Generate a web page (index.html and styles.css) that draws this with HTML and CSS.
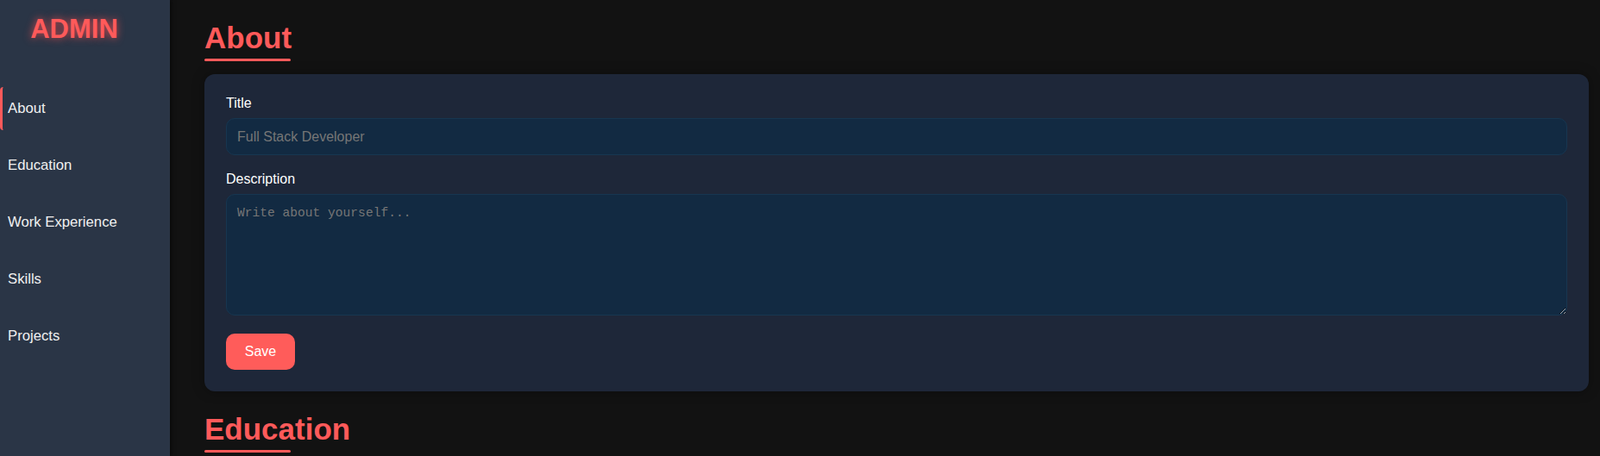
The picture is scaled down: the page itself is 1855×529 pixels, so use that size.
FILE: index.html
```html
<!DOCTYPE html>
<html lang="en">
<head>
    <meta charset="UTF-8">
    <meta name="viewport" content="width=device-width, initial-scale=1.0">
    <title>Admin Panel</title>
    <link rel="stylesheet" href="styles.css">
</head>
<body>

    <div class="sidebar">
        <h2 class="logo">ADMIN</h2>
        <ul class="nav">
            <li class="active">About</li>
            <li>Education</li>
            <li>Work Experience</li>
            <li>Skills</li>
            <li>Projects</li>
        </ul>
    </div>

    <div class="main">
        <section id="about">
            <h2 class="section-title">About</h2>
            <form class="card">
                <div class="form-group">
                    <label for="title">Title</label>
                    <input type="text" id="title" placeholder="Full Stack Developer">
                </div>
                <div class="form-group">
                    <label for="description">Description</label>
                    <textarea id="description" placeholder="Write about yourself..."></textarea>
                </div>
                <button type="button" class="save-btn">Save</button>
            </form>
        </section>

        <section id="education">
            <h2 class="section-title">Education</h2>
        </section>
    </div>

</body>
</html>
```

FILE: styles.css
```css
body {
    font-family: Arial, "Liberation Sans", sans-serif;
    background-color: #121212;
    color: #fff;
    margin: 0;
    display: flex;
    height: 100vh;
    overflow: hidden;
}

/* Sidebar */
.sidebar {
    width: 197px;
    flex-shrink: 0;
    background-color: #2a3546;
    padding-top: 16px;
    box-shadow: 2px 0 4px rgba(0, 0, 0, 0.5);
    z-index: 1;
}

.logo {
    width: 172px;
    margin: 0 0 49px;
    text-align: center;
    font-size: 31px;
    color: #ff5a5a;
    text-shadow: 0 0 10px rgba(255, 80, 80, 0.8);
}

.nav {
    list-style: none;
    margin: 0;
    padding: 0;
    display: flex;
    flex-direction: column;
    gap: 16px;
}

.nav li {
    font-size: 16.7px;
    color: #f0f0f0;
    padding: 15px 6px;
    border-left: 3px solid transparent;
    border-radius: 4px;
    cursor: pointer;
}

.nav li.active {
    border-left-color: #ff5a5a;
}

/* Main area */
.main {
    flex: 1;
    padding: 24px 13px 0 40px;
}

section {
    margin-bottom: 24px;
}

.section-title {
    position: relative;
    display: inline-block;
    margin: 0 0 15px;
    padding-bottom: 7px;
    font-size: 35px;
    color: #ff5a5a;
}

.section-title::after {
    content: "";
    position: absolute;
    left: 0;
    bottom: 0;
    width: 100px;
    height: 3px;
    border-radius: 2px;
    background-color: #ff5a5a;
}

/* Form card */
.card {
    background-color: #1e2739;
    border-radius: 12px;
    padding: 25px;
    box-shadow: 0 0 14px rgba(0, 0, 0, 0.35);
}

.form-group {
    margin-bottom: 19px;
}

.form-group label {
    display: block;
    font-size: 16px;
    margin-bottom: 8px;
}

.form-group input,
.form-group textarea {
    display: block;
    width: 100%;
    box-sizing: border-box;
    background-color: #122a42;
    border: 1px solid #173650;
    border-radius: 10px;
    color: #fff;
    padding: 11px 12px;
    outline: none;
}

.form-group input {
    height: 43px;
    font-family: Arial, "Liberation Sans", sans-serif;
    font-size: 16px;
}

.form-group textarea {
    height: 141px;
    padding-top: 13px;
    font-family: Consolas, "Liberation Mono", monospace;
    font-size: 14.6px;
    resize: vertical;
}

::placeholder {
    color: #767676;
}

.save-btn {
    margin-top: 2px;
    width: 80px;
    height: 42px;
    font-family: Arial, "Liberation Sans", sans-serif;
    font-size: 16px;
    color: #fff;
    background-color: #ff5c5a;
    border: none;
    border-radius: 10px;
    cursor: pointer;
}

.save-btn:hover {
    background-color: #e84848;
}
```
